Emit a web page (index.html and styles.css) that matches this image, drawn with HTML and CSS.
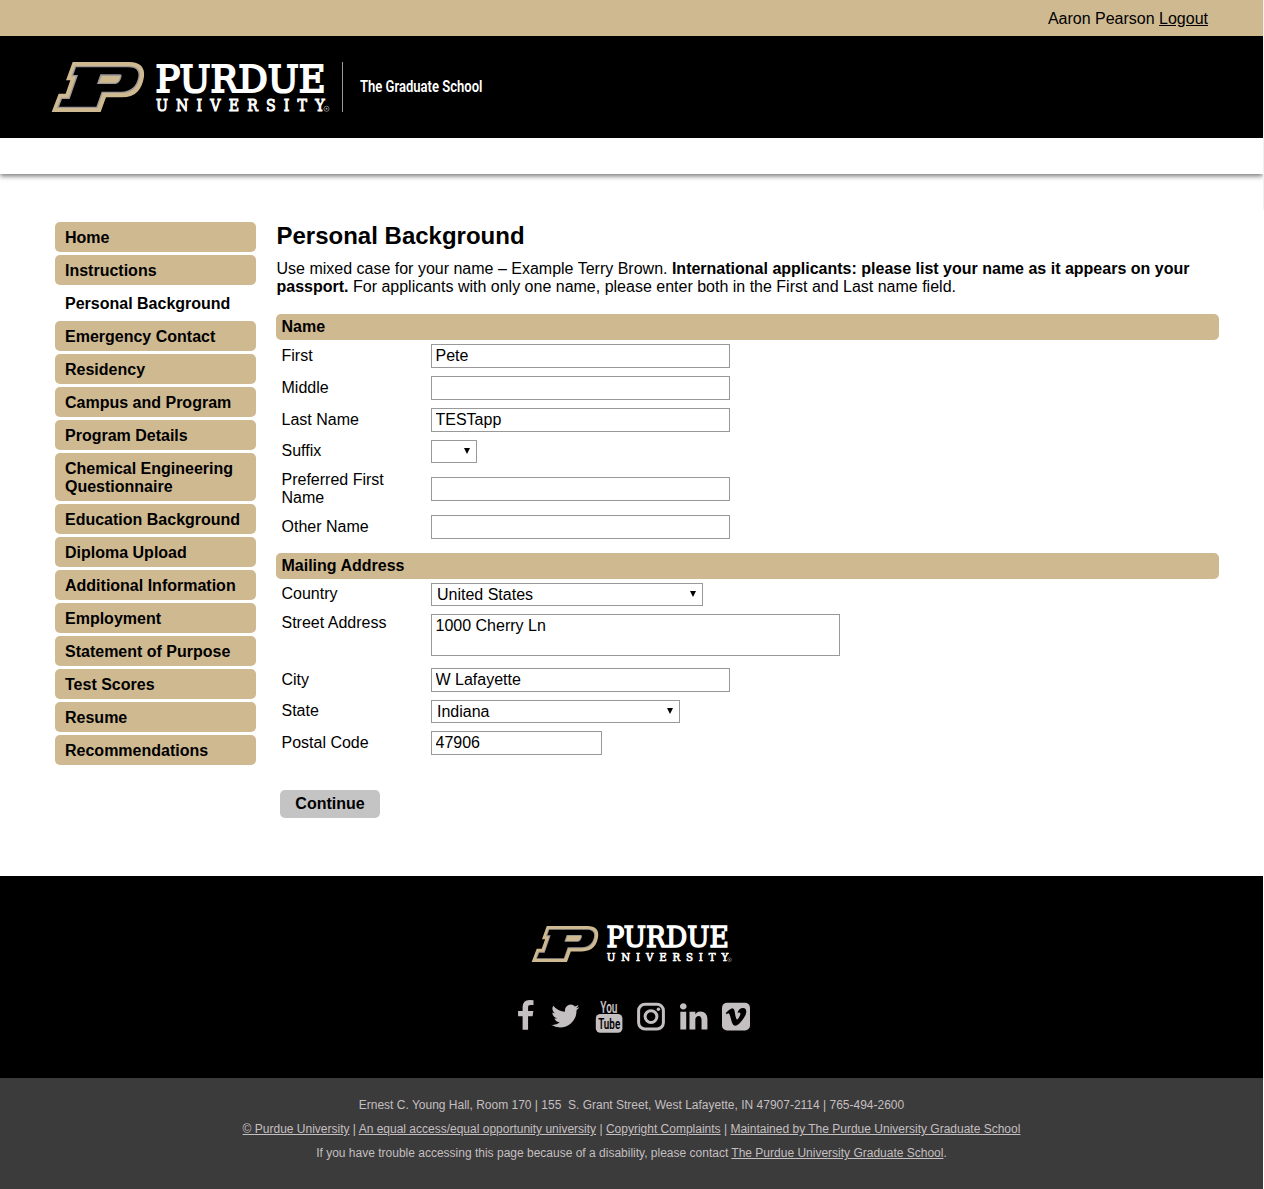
FILE: index.html
```html
<!DOCTYPE html>
<html lang="en">
<head>
<meta charset="utf-8">
<title>Personal Background</title>
<link rel="stylesheet" href="styles.css">
</head>
<body>
<svg class="defs" aria-hidden="true">
  <symbol id="purdue" viewBox="0 0 280 50" overflow="visible">
    <g transform="scale(.3333) translate(-33 -36)">
      <path fill="#cfb991" d="M98 36H268C300 36 316 52 312 80C306 118 288 142 245 142H198L182 186H35L56 131H77L91 91H78Z"/>
      <path fill="#9d9795" d="M105 48H266C290 48 303 58 299 81C294 111 277 129 243 129H188L172 174H51L63 143H86L108 79H94Z"/>
      <path fill="#000" d="M108 52H265C287 52 298 61 295 81C290 107 275 125 242 125H185L169 170H57L66 147H89L114 75H100Z"/>
      <path fill="#9d9795" d="M181 73H240Q247 73 244 82Q239 102 225 102H171Z"/>
      <path fill="#cfb991" d="M185 78H239Q242 78 240 83Q235 98 225 98H177Z"/>
    </g>
    <text class="wordmark big" x="104.500" y="29.700" font-size="38" textLength="170" lengthAdjust="spacingAndGlyphs">PURDUE</text>
    <g transform="translate(105 49.200) scale(.86 1)"><text class="wordmark small" x="0" y="0" font-size="16.500" textLength="196" lengthAdjust="spacing">UNIVERSITY</text></g>
    <circle cx="275.500" cy="46.800" r="2.600" fill="none" stroke="#aaa" stroke-width=".7"/>
    <circle cx="275.500" cy="46.800" r="1" fill="#999"/>
  </symbol>
</svg>
<div class="page">
  <div class="userbar">Aaron Pearson <a href="#">Logout</a></div>
  <header class="masthead">
    <svg class="logo" width="280" height="50"><use href="#purdue"/></svg>
    <span class="rule"></span>
    <svg class="unit" width="124" height="24"><text x="0" y="17" textLength="122.500" lengthAdjust="spacingAndGlyphs">The Graduate School</text></svg>
  </header>
  <div class="strip"></div>
  <span class="edge"></span>
  <div class="columns">
    <nav class="menu">
      <a href="#">Home</a>
      <a href="#">Instructions</a>
      <a href="#" class="current">Personal Background</a>
      <a href="#">Emergency Contact</a>
      <a href="#">Residency</a>
      <a href="#">Campus and Program</a>
      <a href="#">Program Details</a>
      <a href="#">Chemical Engineering Questionnaire</a>
      <a href="#">Education Background</a>
      <a href="#">Diploma Upload</a>
      <a href="#">Additional Information</a>
      <a href="#">Employment</a>
      <a href="#">Statement of Purpose</a>
      <a href="#">Test Scores</a>
      <a href="#">Resume</a>
      <a href="#">Recommendations</a>
    </nav>
    <main class="content">
      <h1>Personal Background</h1>
      <p class="intro">Use mixed case for your name – Example Terry Brown. <b>International applicants: please list your name as it appears on your<br>passport.</b> For applicants with only one name, please enter both in the First and Last name field.</p>
      <form>
        <h2>Name</h2>
        <div class="row"><label for="first">First</label><input id="first" value="Pete"></div>
        <div class="row"><label for="middle">Middle</label><input id="middle"></div>
        <div class="row"><label for="last">Last Name</label><input id="last" value="TESTapp"></div>
        <div class="row pick"><label for="suffix">Suffix</label><span class="select suffix"><select id="suffix"><option></option></select></span></div>
        <div class="row tall"><label for="pref">Preferred First Name</label><input id="pref"></div>
        <div class="row"><label for="other">Other Name</label><input id="other"></div>
        <h2 class="second">Mailing Address</h2>
        <div class="row pick"><label for="country">Country</label><span class="select country"><select id="country"><option>United States</option></select></span></div>
        <div class="row street"><label for="street">Street Address</label><textarea id="street">1000 Cherry Ln</textarea></div>
        <div class="row"><label for="city">City</label><input id="city" value="W Lafayette"></div>
        <div class="row pick"><label for="state">State</label><span class="select state"><select id="state"><option>Indiana</option></select></span></div>
        <div class="row"><label for="zip">Postal Code</label><input id="zip" class="zip" value="47906"></div>
        <button type="button">Continue</button>
      </form>
    </main>
  </div>
  <footer>
    <div class="brand">
      <svg class="logo-small" width="202" height="36"><use href="#purdue"/></svg>
      <div class="social">
        <svg class="facebook" width="16" height="34" viewBox="8.500 0 16 34"><path transform="scale(.01786)" d="M1343 12v264h-157q-86 0-116 36t-30 108v189h293l-39 296h-254v759h-306v-759h-255v-296h255v-218q0-186 104-288.500t277-102.500q147 0 228 12z"/></svg>
        <svg width="29" height="34" viewBox="1.700 0 29 34"><path transform="scale(.01786)" d="M1684 408q-67 98-162 167 1 14 1 42 0 130-38 259.500t-115.500 248.500-184.500 210.500-258 146-323 54.500q-271 0-496-145 35 4 78 4 225 0 401-138-105-2-188-64.500t-114-159.500q33 5 61 5 43 0 85-11-112-23-185.500-111.500t-73.500-205.500v-4q68 38 146 41-66-44-105-115t-39-154q0-88 44-163 121 149 294.500 238.500t371.500 99.500q-8-38-8-74 0-134 94.500-228.500t228.500-94.500q140 0 236 102 109-21 205-78-37 115-142 178 93-10 186-50z"/></svg>
        <svg class="youtube" width="28" height="34" viewBox="0 0 28 34"><rect x=".8" y="14" width="26.600" height="18.800" rx="4.500"/><text x="5.300" y="12.700" font-size="17" textLength="17.200" lengthAdjust="spacingAndGlyphs">You</text><text class="cut" x="3.200" y="29" font-size="15.500" textLength="22" lengthAdjust="spacingAndGlyphs">Tube</text></svg>
        <svg class="line" width="28" height="34" viewBox="0 0 28 34"><rect x="1.600" y="4.200" width="24.800" height="24.800" rx="6.500"/><circle cx="14" cy="16.600" r="5.900"/><circle class="dot" cx="21.400" cy="9.300" r="1.700"/></svg>
        <svg class="linkedin" width="28" height="34" viewBox="2.300 -.7 28 34"><path transform="scale(.01786)" d="M477 625v991h-330v-991h330zm21-306q1 73-50.500 122t-135.500 49h-2q-82 0-132-49t-50-122q0-74 51.500-122.500t134.500-48.500 133 48.500 51 122.500zm1166 729v568h-329v-530q0-105-40.500-164.500t-126.500-59.500q-63 0-105.500 34.500t-63.500 85.500q-11 30-11 81v553h-329q2-399 2-647t-1-296l-1-48h329v144h-2q20-32 41-56t56.500-52 87-43.500 114.500-15.500q171 0 275 113.500t104 332.500z"/></svg>
        <svg width="28" height="34" viewBox="0 0 28 34"><rect x="0" y="2.700" width="28" height="27.700" rx="5"/><path class="cut" transform="translate(2.700 5.700) scale(.0126)" d="M1709 518q-10 236-332 651-333 431-562 431-142 0-240-263-44-160-132-482-72-262-157-262-18 0-127 76l-77-98q24-21 108-96.500t130-115.500q156-138 241-146 95-9 153 55.500t81 203.500q44 287 66 373 55 249 120 249 51 0 154-161 101-161 109-246 13-139-109-139-57 0-121 26 120-393 459-382 251 8 236 326z"/></svg>
      </div>
    </div>
    <div class="legal">
      <p>Ernest C. Young Hall, Room 170 | 155 &nbsp;S. Grant Street, West Lafayette, IN 47907-2114 | 765-494-2600</p>
      <p><a href="#">© Purdue University</a> | <a href="#">An equal access/equal opportunity university</a> | <a href="#">Copyright Complaints</a> | <a href="#">Maintained by The Purdue University Graduate School</a></p>
      <p>If you have trouble accessing this page because of a disability, please contact <a href="#">The Purdue University Graduate School</a>.</p>
    </div>
  </footer>
</div>
</body>
</html>
```
FILE: styles.css
```css
* { box-sizing: border-box; }
body { margin: 0; background: #fff; color: #000; font: 16px/18px "Liberation Sans", Arial, sans-serif; }
svg { overflow: visible; }
.defs { position: absolute; width: 0; height: 0; }
.page { position: relative; width: 1263px; }
a { color: inherit; }
.userbar { height: 36px; padding: 1px 55px 0; background: #cfb991; text-align: right; line-height: 36px; }
.masthead { display: flex; align-items: center; height: 102px; padding-left: 51px; background: #000; }
.wordmark { fill: #fff; stroke: #fff; font-family: "DejaVu Serif", serif; font-weight: normal; }
.big { stroke-width: 2px; }
.small { stroke-width: 1px; }
.rule { width: 1px; height: 50px; margin-left: 11px; background: #9d9795; }
.unit { margin-left: 17px; }
.unit text { fill: #fff; font: 600 17px Roboto, sans-serif; }
.strip { height: 36px; background: #fff; box-shadow: 0 2px 5px rgba(0,0,0,.55); }
.edge { position: absolute; top: 0; right: -1px; width: 1px; height: 210px; background: #f0f0f0; }
.columns { display: flex; gap: 20px; height: 702px; padding: 48px 44px 0 55px; }
.menu { display: flex; flex-direction: column; gap: 3px; width: 201px; }
.menu a { padding: 7px 10px 5px; border-radius: 5px; background: #cfb991; font-weight: bold; text-decoration: none; }
.menu .current { background: none; }
.content { flex: 1; }
h1 { margin: 0; padding-left: .5px; font-size: 24px; line-height: 28px; }
.intro { margin: 10px 0 18px; padding-left: .5px; white-space: nowrap; }
h2 { height: 26px; margin: 0; padding: 4px 5.5px; border-radius: 5px; background: #cfb991; font-size: 16px; line-height: 18px; }
h2.second { margin-top: 10px; }
.row { display: flex; height: 32px; padding: 4px 5px; }
.row label { width: 125px; margin-right: 25px; padding: 3px 0 0 .5px; }
.row.pick label { padding-top: 2px; }
.pick { height: 31px; }
.tall { height: 44px; }
.row.tall label { padding-top: 0; }
.tall input { margin-top: 6px; }
.street { height: 54px; }
.row.street label { padding-top: 0; }
input, textarea, select { margin: 0; border: 1px solid #999; border-radius: 0; background: #fff; color: #000; font: 16px/18px "Liberation Sans", Arial, sans-serif; }
input { width: 299px; height: 24px; padding: 0 3.5px; }
.zip { width: 171px; }
textarea { width: 409px; height: 42px; padding: 2px 3.5px; resize: none; }
.select { position: relative; height: 23px; }
.select::after { content: ""; position: absolute; right: 7px; top: 8px; border: solid transparent; border-width: 6px 3px 0; border-top-color: #000; }
select { appearance: none; width: 100%; height: 23px; padding: 0 5px; }
.suffix { width: 46px; }
.country { width: 272px; }
.state { width: 249px; }
button { display: block; width: 100px; height: 28px; margin: 31px 0 0 4px; padding: 0; border: 0; border-radius: 5px; background: #c4c4c4; color: #000; font: bold 16px/28px "Liberation Sans", Arial, sans-serif; }
.brand { display: flex; flex-direction: column; align-items: center; height: 202px; padding-top: 50px; background: #000; }
.logo-small { display: block; }
.social { display: flex; gap: 15px; margin-top: 38px; padding-left: 4px; fill: #c4bfc0; }
.facebook { margin-right: 2px; }
.youtube, .linkedin { margin-right: -1px; }
.social text { font-family: Roboto, sans-serif; font-weight: 600; }
.social .cut { fill: #000; }
.line { fill: none; stroke: #c4bfc0; stroke-width: 3; }
.dot { fill: #c4bfc0; stroke: none; }
.legal { height: 111px; padding-top: 15px; background: #3b3b3b; color: #c4bfc0; font-size: 12px; line-height: 24px; text-align: center; }
.legal p { margin: 0; }
```
